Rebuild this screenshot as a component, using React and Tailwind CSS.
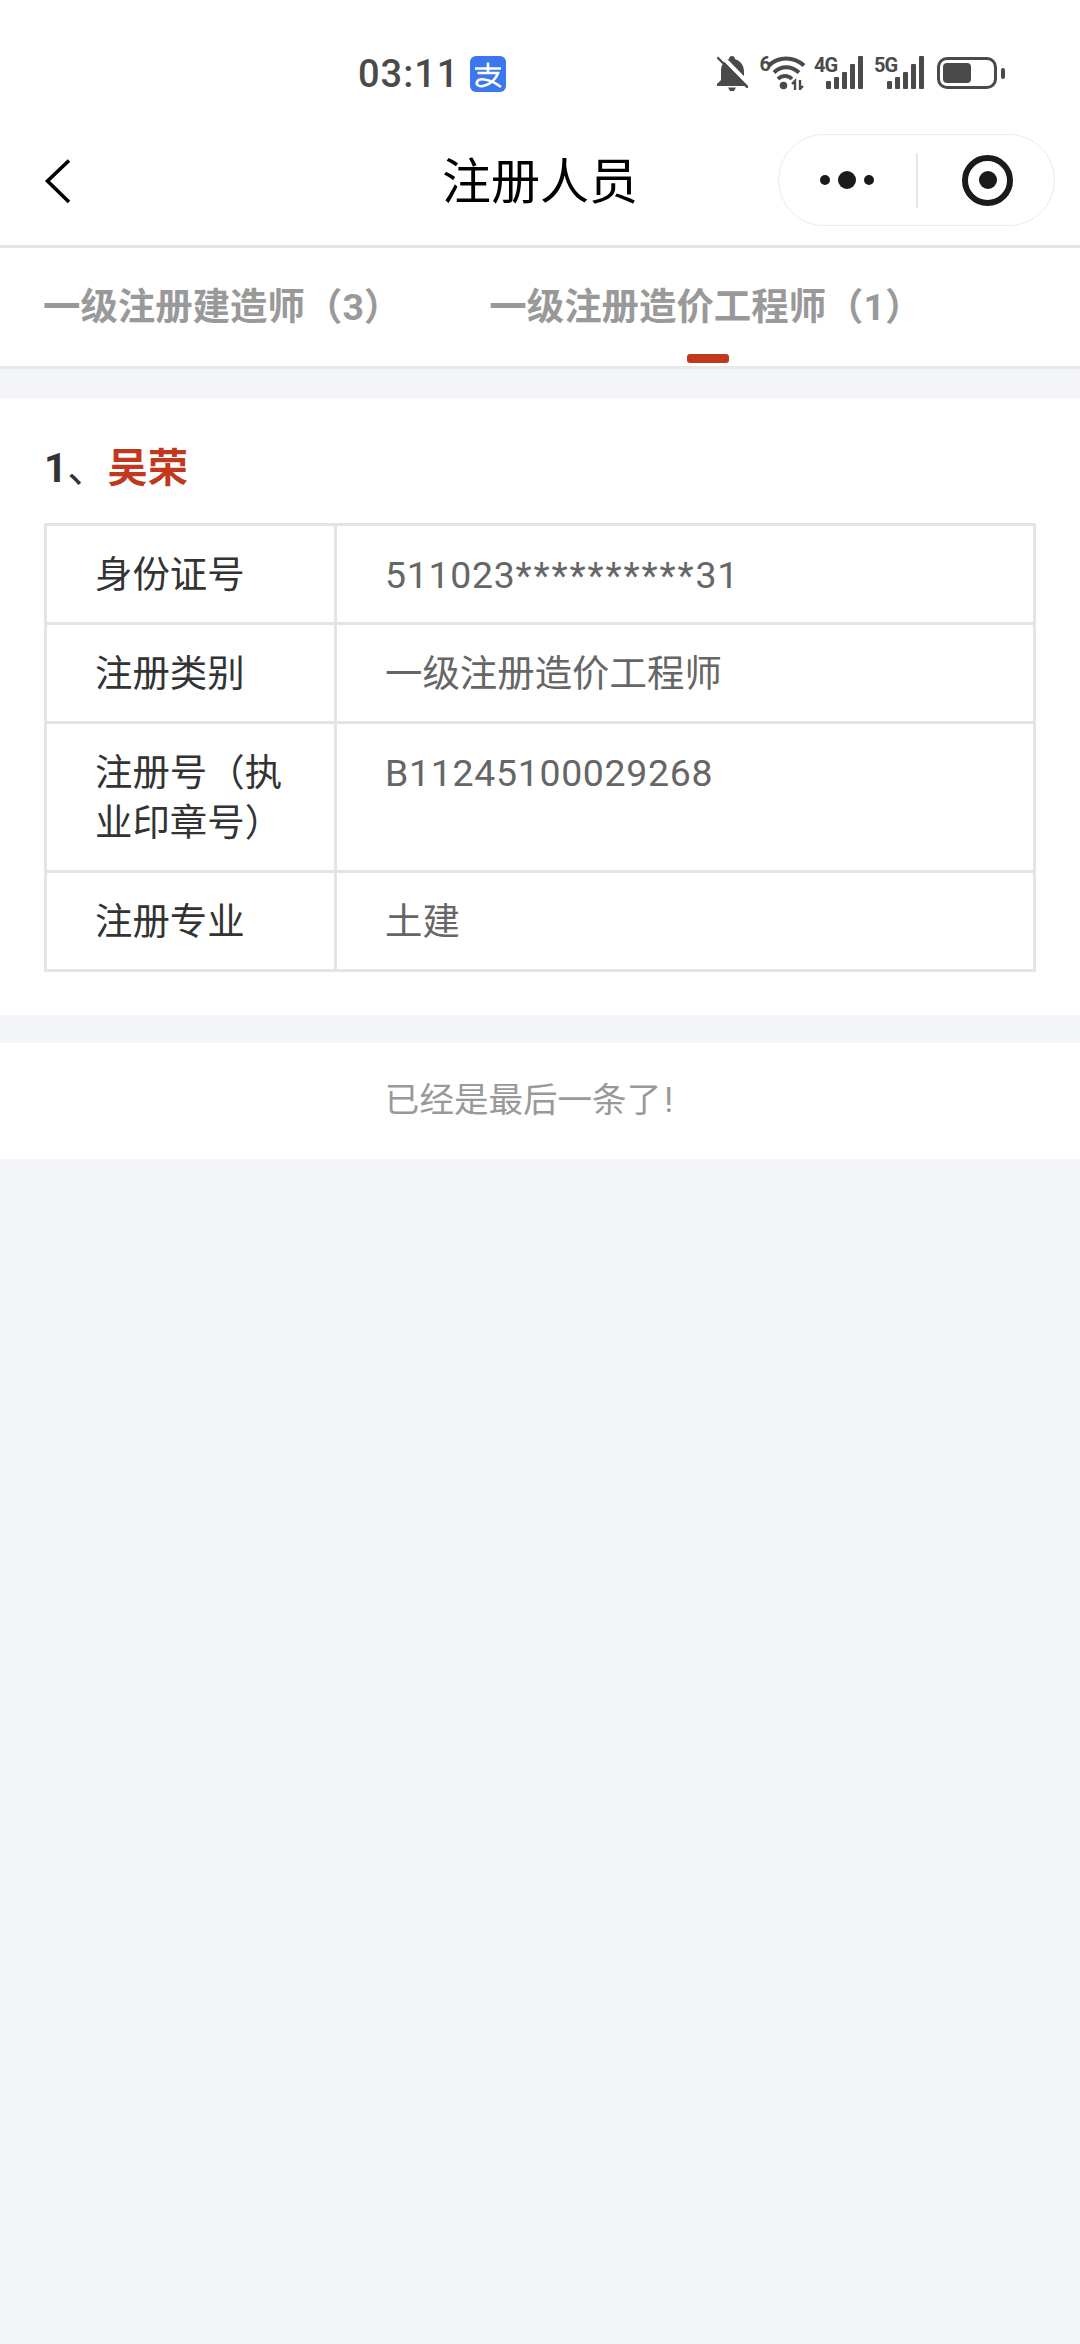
function BellOff() {
  return (
    <svg width="32" height="37" viewBox="0 0 32 37">
      <path d="M15 1c2 0 3 1.500 3 3 6 2 9 7 9 13v8l4 4v2H0v-2l4-4v-9c0-6 3-10 8-12 0-1.500 1-3 3-3Z" fill="#4a4a4a" />
      <path d="M11 32.500h8l-2 3.500h-4Z" fill="#4a4a4a" />
      <path d="M4.500 1 32.500 29.500" stroke="#fff" strokeWidth="4" />
      <path d="M1 3 30 32" stroke="#4a4a4a" strokeWidth="2.400" strokeLinecap="round" />
    </svg>
  );
}

function Wifi() {
  return (
    <svg width="38" height="34" viewBox="0 0 38 34" fill="none">
      <path d="M1 9.500C10 0 26 0 36 9.500" stroke="#4a4a4a" strokeWidth="4" />
      <path d="M6 16.500C13 9.500 23 9.500 31 16.500" stroke="#4a4a4a" strokeWidth="4" />
      <path d="M10 23C14 19 20 19 24 23" stroke="#4a4a4a" strokeWidth="3.800" />
      <circle cx="15.500" cy="29.500" r="3.800" fill="#4a4a4a" />
      <path d="M27 34V25l-3 3M32 24v9l3-3" stroke="#4a4a4a" strokeWidth="2.400" />
    </svg>
  );
}

function Signal({ label, className }) {
  const heights = ["h-[8px]", "h-[12px]", "h-[17px]", "h-[25px]", "h-[33px]"];
  return (
    <div className={`relative flex h-[33px] items-end justify-end gap-[3px] ${className}`}>
      <span className="absolute left-0 top-[0px] text-[20px] font-bold leading-[18px] tracking-[-1px] text-[#4a4a4a]">{label}</span>
      {heights.map((h) => (
        <div key={h} className={`w-[5px] rounded-[1px] bg-[#4a4a4a] ${h}`} />
      ))}
    </div>
  );
}

function Battery() {
  return (
    <div className="flex items-center gap-[4px]">
      <div className="flex h-[32px] w-[60px] items-center rounded-[10px] border-[3px] border-[#4a4a4a] p-[3px]">
        <div className="h-[20px] w-[28px] rounded-[4px] bg-[#4a4a4a]" />
      </div>
      <div className="h-[11px] w-[4px] rounded-[2px] bg-[#4a4a4a]" />
    </div>
  );
}

function AlipayIcon() {
  return (
    <svg width="36" height="36" viewBox="0 0 36 36">
      <rect width="36" height="36" rx="6" fill="#3b78f0" />
      <path d="M5 12.500h26M18 6.500v10.500M7.500 17H28C26 23 20 29 13 30 8 31 6 28 7 26 8 23 13 23 17 24 22 25 27 28 31 31" fill="none" stroke="#fff" strokeWidth="2.600" />
    </svg>
  );
}

function Row({ label, value }) {
  return (
    <div className="flex border-b-[3px] border-[#e4e4e4] last:border-b-0">
      <div className="w-[290px] shrink-0 border-r-[3px] border-[#e4e4e4] px-[48px] pb-[22px] pt-[24px] text-[37.440px] leading-[50px] text-[#333333]">{label}</div>
      <div className="flex-1 px-[48px] pb-[22px] pt-[24px] text-[37.440px] leading-[50px] text-[#666666]">{value}</div>
    </div>
  );
}

export default function App() {
  return (
    <div className="flex h-[2344px] w-[1080px] flex-col overflow-hidden bg-[#f4f5f9] font-['Roboto','Noto_Sans_CJK_SC',sans-serif]">
      <div className="flex h-[132px] items-start bg-white pt-[52px]">
        <div className="ml-[358px] flex items-center gap-[11px]">
          <span className="text-[38px] font-medium leading-[44px] tracking-[1px] text-[#4a4a4a]">03:11</span>
          <AlipayIcon />
        </div>
        <div className="ml-[211px] flex items-start">
          <div className="mt-[3px]"><BellOff /></div>
          <div className="ml-[10px] mt-[2px] flex items-start">
            <span className="text-[20px] font-bold leading-[20px] text-[#4a4a4a]">6</span>
            <div className="ml-[-3px] mt-[2px]"><Wifi /></div>
          </div>
          <Signal label="4G" className="ml-[8px] mt-[4px] w-[49px]" />
          <Signal label="5G" className="ml-[11px] mt-[4px] w-[50px]" />
          <div className="ml-[13px] mt-[5px]"><Battery /></div>
        </div>
      </div>

      <div className="relative flex h-[116px] items-start justify-center border-b-[3px] border-[#e4e4e4] bg-white pt-[19px]">
        <svg className="absolute left-[44px] top-[26px]" width="28" height="46" viewBox="0 0 28 46" fill="none">
          <path d="M25 2.500 3.500 23 25 44" stroke="#000" strokeWidth="3.600" />
        </svg>
        <span className="text-[49px] leading-[64px] text-black">注册人员</span>
        <div className="absolute left-[778px] top-[2px] flex h-[92px] w-[277px] items-center rounded-[46px] border-[1.500px] border-[#ebebeb] bg-white">
          <div className="flex w-[137px] items-center justify-center gap-[8px] pr-[2px]">
            <div className="h-[10px] w-[10px] rounded-full bg-[#1a1a1a]" />
            <div className="h-[18px] w-[18px] rounded-full bg-[#1a1a1a]" />
            <div className="h-[10px] w-[10px] rounded-full bg-[#1a1a1a]" />
          </div>
          <div className="h-[55px] w-[1.500px] bg-[#e6e6e6]" />
          <div className="flex flex-1 items-center justify-center pl-[4px]">
            <div className="flex h-[51px] w-[51px] items-center justify-center rounded-full border-[6px] border-[#1a1a1a]">
              <div className="h-[18px] w-[18px] rounded-full bg-[#1a1a1a]" />
            </div>
          </div>
        </div>
      </div>

      <div className="flex h-[121px] items-start border-b-[3px] border-[#e8e8e8] bg-white pl-[43px] pt-[34px]">
        <span className="text-[37.440px] font-bold leading-[50px] text-[#999999]">一级注册建造师（3）</span>
        <div className="relative ml-[88px] h-[82px]">
          <span className="text-[37.440px] font-bold leading-[50px] text-[#999999]">一级注册造价工程师（1）</span>
          <div className="absolute left-[198px] top-[72px] h-[9px] w-[42px] rounded-[3px] bg-[#c0391f]" />
        </div>
      </div>

      <div className="mt-[29px] bg-white px-[44px] pb-[43px] pt-[44px]">
        <div className="mb-[27px] text-[40.320px] font-bold leading-[54px] text-[#333333]">
          1<span className="font-normal">、</span><span className="text-[#c0391f]">吴荣</span>
        </div>
        <div className="w-[992px] border-[3px] border-[#e4e4e4]">
          <Row
            label="身份证号"
            value={
              <>
                <span className="tracking-[0.700px]">511023</span>
                <span className="tracking-[1.900px]">**********</span>
                <span className="tracking-[0.700px]">31</span>
              </>
            }
          />
          <Row label="注册类别" value="一级注册造价工程师" />
          <Row label={<>注册号（执<br />业印章号）</>} value={<span className="tracking-[0.700px]">B11245100029268</span>} />
          <Row label="注册专业" value="土建" />
        </div>
      </div>

      <div className="mt-[28px] flex h-[116px] items-center justify-center bg-white pr-[22px] text-[34.560px] text-[#999999]">
        已经是最后一条了<span className="ml-[3px]">!</span>
      </div>
    </div>
  );
}
